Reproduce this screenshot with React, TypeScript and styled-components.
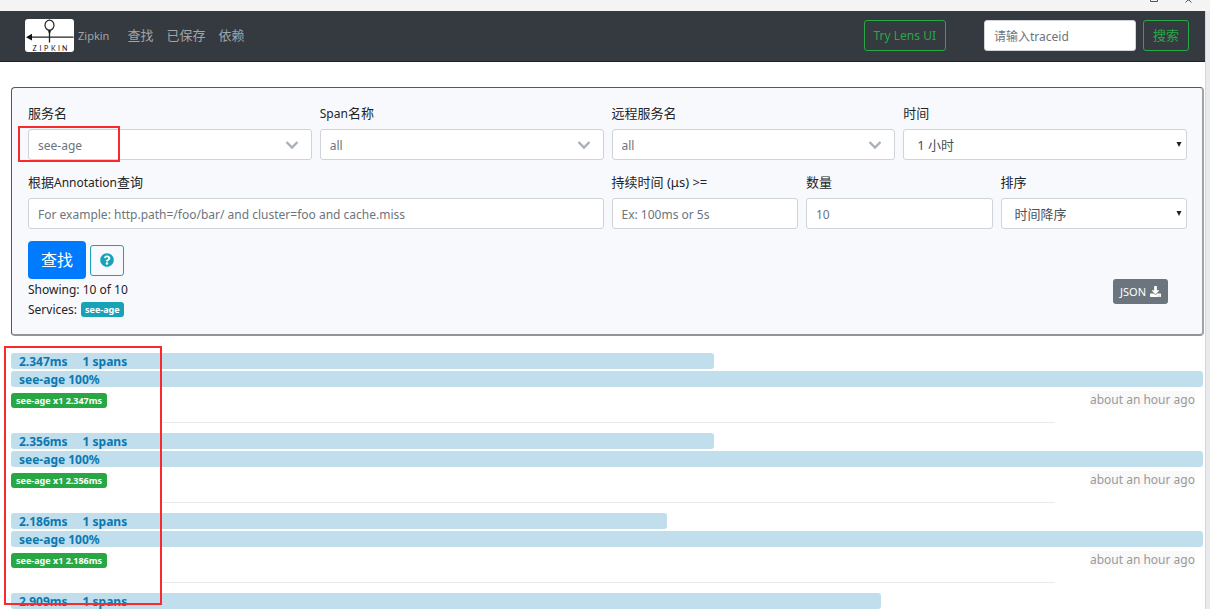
import React from 'react';
import styled, { createGlobalStyle } from 'styled-components';
import { FaDownload, FaQuestionCircle } from 'react-icons/fa';

const GlobalStyle = createGlobalStyle`
  *, *::before, *::after { box-sizing: border-box; }
  body {
    margin: 0;
    background: #e9eaec;
    color: #212529;
    font-family: "Noto Sans", "Noto Sans CJK SC", sans-serif;
    font-size: 12px;
    line-height: 19px;
  }
  button, input, select { font: inherit; }
`;

const Screen = styled.div`
  min-height: 100vh;
  padding-right: 5px;
`;

const WindowStrip = styled.div`
  display: flex;
  justify-content: flex-end;
  height: 11px;
  margin-right: -5px;
  padding-right: 17px;
  background: #f4f4f4;
`;

const Page = styled.div`
  position: relative;
  min-height: calc(100vh - 11px);
  background: #fff;
  box-shadow: 1px 0 0 #d6d7d9;
`;

const Navbar = styled.header`
  display: flex;
  align-items: center;
  height: 51px;
  padding: 0 16px 1px 25px;
  background: #343a40;
  border-bottom: 1px solid #1c1f24;
`;

const Brand = styled.a`
  display: flex;
  align-items: center;
  gap: 4px;
  margin-right: 18px;
  color: #a0a4a8;
  font-size: 11px;
  text-decoration: none;
`;

const NavLinks = styled.nav`
  display: flex;
  gap: 13px;
  flex: 1;
`;

const NavLink = styled.a`
  color: #a0a4a8;
  font-size: 13px;
  text-decoration: none;
`;

const OutlineButton = styled.button<{ $tone: string; $size?: number }>`
  display: inline-flex;
  align-items: center;
  justify-content: center;
  height: 31px;
  padding: 0 9px;
  border: 1px solid ${(p) => p.$tone};
  border-radius: 3px;
  background: transparent;
  color: ${(p) => p.$tone};
  font-size: ${(p) => p.$size ?? 12}px;
  white-space: nowrap;
`;

const TraceSearch = styled.form`
  display: flex;
  gap: 7px;
  margin-left: 38px;
`;

const TextInput = styled.input`
  width: 100%;
  height: 31px;
  padding: 1px 9px 0;
  border: 1px solid #ced4da;
  border-radius: 3px;
  background: #fff;
  color: #6c757d;
  &::placeholder { color: #6c757d; opacity: 1; }
`;

const TraceInput = styled(TextInput)`
  width: 152px;
`;

const Content = styled.main`
  padding: 25px 1px 0 11px;
`;

const Panel = styled.section`
  padding: 16px 15px 15px 16px;
  border: 1px solid #55595e;
  border-right: 2px solid #a0a2a5;
  border-bottom: 2px solid #929497;
  border-radius: 4px;
  background: #f8f9fc;
`;

const Fields = styled.form`
  display: grid;
  grid-template-columns: repeat(12, 1fr);
  gap: 13px 8px;
`;

const Field = styled.div<{ $span: number }>`
  display: flex;
  flex-direction: column;
  gap: 6px;
  min-width: 0;
  grid-column: span ${(p) => p.$span};
`;

const Label = styled.label`
  height: 19px;
  font-size: 13px;
`;

const Latin = styled.span`
  font-size: 12px;
`;

const SelectBox = styled.div`
  position: relative;
`;

const Select = styled.select<{ $plain?: boolean }>`
  display: block;
  width: 100%;
  height: 31px;
  padding: 2px ${(p) => (p.$plain ? 13 : 9)}px 0;
  appearance: none;
  border: 1px solid #ced4da;
  border-radius: 3px;
  background: #fff;
  color: ${(p) => (p.$plain ? '#495057' : '#6c757d')};
  font-size: ${(p) => (p.$plain ? 13 : 12)}px;
`;

const Arrow = styled.svg<{ $right: number }>`
  position: absolute;
  top: 0;
  bottom: 0;
  right: ${(p) => p.$right}px;
  margin: auto 0;
  pointer-events: none;
`;

const Actions = styled.div`
  display: flex;
  align-items: center;
  gap: 4px;
  margin-top: 12px;
`;

const FindButton = styled.button`
  height: 38px;
  padding: 0 13px;
  border: 0;
  border-radius: 4px;
  background: #007bff;
  color: #fff;
  font-size: 16px;
`;

const Summary = styled.div`
  display: flex;
  align-items: flex-start;
  justify-content: space-between;
  padding: 0 19px 0 0;
`;

const SummaryLine = styled.div`
  display: flex;
  align-items: center;
  gap: 4px;
  height: 20px;
`;

const Badge = styled.span<{ $color: string }>`
  display: inline-block;
  height: 15px;
  padding: 0 4px;
  border-radius: 3px;
  background: ${(p) => p.$color};
  color: #fff;
  font-size: 9px;
  font-weight: 700;
  line-height: 15px;
  white-space: nowrap;
`;

const JsonButton = styled.button`
  display: flex;
  align-items: center;
  gap: 4px;
  height: 25px;
  padding: 0 7px;
  border: 0;
  border-radius: 3px;
  background: #6c757d;
  color: #fff;
  font-size: 11px;
`;

const TraceList = styled.ul`
  display: flex;
  flex-direction: column;
  gap: 10px;
  margin: 17px 0 0;
  padding: 0 1px 0 0;
  list-style: none;
`;

const Trace = styled.li`
  display: flex;
  flex-direction: column;
  gap: 2px;
`;

const Bar = styled.div`
  display: flex;
  gap: 15px;
  height: 16px;
  padding: 0 8px;
  border-radius: 3px;
  background: #c1deed;
  color: #0b78b0;
  font-weight: 700;
  line-height: 17px;
  white-space: nowrap;
`;

const TraceFooter = styled.div`
  display: flex;
  align-items: flex-start;
  justify-content: space-between;
  height: 33px;
  padding: 2px 8px 0 0;
`;

const TraceBadge = styled(Badge)`
  margin-top: 2px;
  padding: 0 5px;
`;

const Ago = styled.time`
  height: 17px;
  background: #f9f9f9;
  color: #999;
  line-height: 17px;
`;

const Rule = styled.hr`
  width: 75%;
  height: 1px;
  margin: -2px 0 0 150px;
  border: 0;
  background: #e9eaeb;
`;

const Highlight = styled.div<{ $x: number; $y: number; $w: number; $h: number }>`
  position: absolute;
  left: ${(p) => p.$x}px;
  top: ${(p) => p.$y}px;
  width: ${(p) => p.$w}px;
  height: ${(p) => p.$h}px;
  border: 2px solid #f82a2e;
  pointer-events: none;
`;

const Logo = () => (
  <svg width="49" height="33" viewBox="0 0 49 33" aria-hidden="true">
    <rect width="49" height="33" rx="3" fill="#fff" />
    <ellipse cx="24.5" cy="6.2" rx="4.5" ry="5" fill="none" stroke="#222" strokeWidth="1.2" />
    <path d="M24.5 11v12.5M5 18.2h43.5" stroke="#222" strokeWidth="1.3" fill="none" />
    <path d="M23 11.5h3l-1 3h-1zM1 18.2L7 14.8v6.8z" fill="#111" />
    <text x="7.5 14.5 19 26 33 37" y="31.5" fontSize="7" fontFamily="Lato, sans-serif" fill="#111">ZIPKIN</text>
  </svg>
);

const WindowControls = () => (
  <svg width="44" height="3" viewBox="0 0 44 3" aria-hidden="true">
    <path d="M1.5 0v1.5h7V0M36.500 2.500L39 0h1l2.500 2.500" fill="none" stroke="#555" />
  </svg>
);

const Chevron = () => (
  <Arrow $right={13} width="14" height="10" viewBox="0 0 14 10" aria-hidden="true">
    <path d="M1.500 2L7 7.500L12.500 2" fill="none" stroke="#a9b0b8" strokeWidth="2.400" />
  </Arrow>
);

const Triangle = () => (
  <Arrow $right={5} width="6" height="7" viewBox="0 0 6 7" aria-hidden="true">
    <path d="M.5 1h5L3 6z" fill="#222" />
  </Arrow>
);

type SelectFieldProps = {
  id: string;
  label: React.ReactNode;
  value: string;
  span: number;
  plain?: boolean;
};

const SelectField = ({ id, label, value, span, plain }: SelectFieldProps) => (
  <Field $span={span}>
    <Label htmlFor={id}>{label}</Label>
    <SelectBox>
      <Select id={id} $plain={plain} defaultValue={value}>
        <option>{value}</option>
      </Select>
      {plain ? <Triangle /> : <Chevron />}
    </SelectBox>
  </Field>
);

type InputFieldProps = {
  id: string;
  label: React.ReactNode;
  span: number;
  placeholder?: string;
  value?: string;
};

const InputField = ({ id, label, span, placeholder, value }: InputFieldProps) => (
  <Field $span={span}>
    <Label htmlFor={id}>{label}</Label>
    <TextInput id={id} placeholder={placeholder} defaultValue={value} />
  </Field>
);

const traces = [
  { duration: '2.347ms', width: 59, details: true },
  { duration: '2.356ms', width: 59, details: true },
  { duration: '2.186ms', width: 55, details: true },
  { duration: '2.909ms', width: 73, details: false },
];

export default function App() {
  return (
    <Screen>
      <GlobalStyle />
      <WindowStrip>
        <WindowControls />
      </WindowStrip>
      <Page>
        <Navbar>
          <Brand href="#">
            <Logo />
            Zipkin
          </Brand>
          <NavLinks>
            <NavLink href="#find">查找</NavLink>
            <NavLink href="#saved">已保存</NavLink>
            <NavLink href="#deps">依赖</NavLink>
          </NavLinks>
          <OutlineButton type="button" $tone="#28a745">Try Lens UI</OutlineButton>
          <TraceSearch onSubmit={(e) => e.preventDefault()}>
            <TraceInput aria-label="traceid" placeholder="请输入traceid" />
            <OutlineButton $tone="#28a745" $size={13}>搜索</OutlineButton>
          </TraceSearch>
        </Navbar>
        <Content>
          <Panel>
            <Fields id="query" onSubmit={(e) => e.preventDefault()}>
              <SelectField id="service" label="服务名" value="see-age" span={3} />
              <SelectField id="span" label={<><Latin>Span</Latin>名称</>} value="all" span={3} />
              <SelectField id="remote" label="远程服务名" value="all" span={3} />
              <SelectField id="lookback" label="时间" value="1 小时" span={3} plain />
              <InputField
                id="annotation"
                label={<>根据<Latin>Annotation</Latin>查询</>}
                span={6}
                placeholder="For example: http.path=/foo/bar/ and cluster=foo and cache.miss"
              />
              <InputField id="duration" label="持续时间 (μs) >=" span={2} placeholder="Ex: 100ms or 5s" />
              <InputField id="limit" label="数量" span={2} value="10" />
              <SelectField id="sort" label="排序" value="时间降序" span={2} plain />
            </Fields>
            <Actions>
              <FindButton form="query">查找</FindButton>
              <OutlineButton type="button" $tone="#17a2b8" aria-label="Help">
                <FaQuestionCircle size={14} />
              </OutlineButton>
            </Actions>
            <Summary>
              <div>
                <SummaryLine>Showing: 10 of 10</SummaryLine>
                <SummaryLine>
                  Services: <Badge $color="#17a2b8">see-age</Badge>
                </SummaryLine>
              </div>
              <JsonButton type="button">
                JSON <FaDownload size={11} />
              </JsonButton>
            </Summary>
          </Panel>
          <TraceList>
            {traces.map((t) => (
              <Trace key={t.duration}>
                <Bar style={{ width: `${t.width}%` }}>
                  <span>{t.duration}</span>
                  <span>1 spans</span>
                </Bar>
                {t.details && (
                  <>
                    <Bar>see-age 100%</Bar>
                    <TraceFooter>
                      <TraceBadge $color="#28a745">see-age x1 {t.duration}</TraceBadge>
                      <Ago>about an hour ago</Ago>
                    </TraceFooter>
                    <Rule />
                  </>
                )}
              </Trace>
            ))}
          </TraceList>
        </Content>
        <Highlight $x={18} $y={115} $w={102} $h={36} />
        <Highlight $x={4} $y={335} $w={158} $h={259} />
      </Page>
    </Screen>
  );
}
